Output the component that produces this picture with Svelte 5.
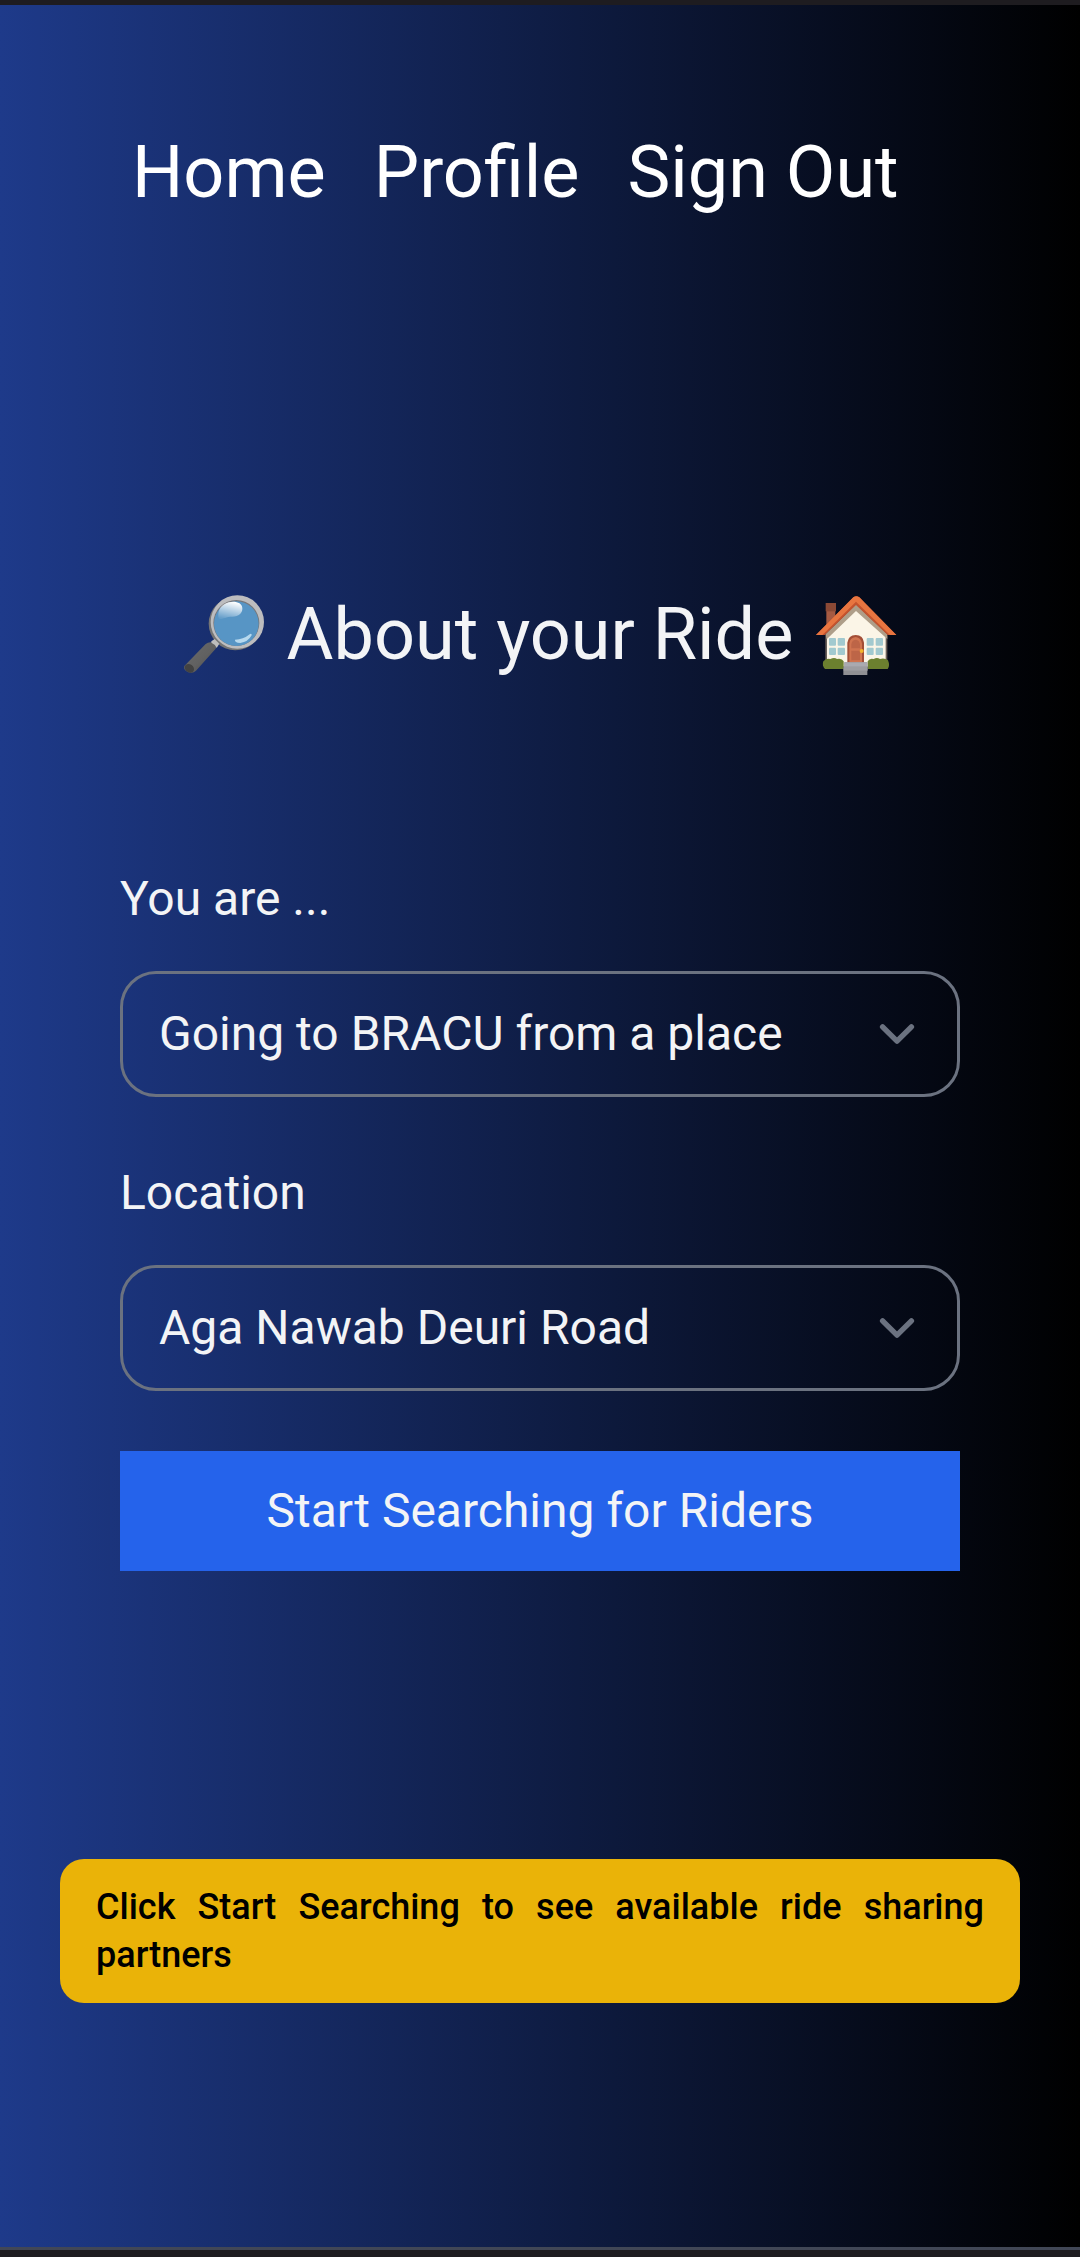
<script>
  const links = ['Home', 'Profile', 'Sign Out'];
  const fields = [
    { label: 'You are ...', value: 'Going to BRACU from a place' },
    { label: 'Location', value: 'Aga Nawab Deuri Road' }
  ];
</script>

<div class="screen">
  <main>
    <nav>
      {#each links as link}<span>{link}</span>{/each}
    </nav>

    <h1>
      <svg class="emoji" viewBox="27 30 270 270" aria-hidden="true">
        <defs>
          <linearGradient id="shine" x1="0.6" y1="0" x2="0.3" y2="1">
            <stop offset="0" stop-color="#fff" />
            <stop offset="1" stop-color="#fff" stop-opacity="0.08" />
          </linearGradient>
          <linearGradient id="handle" x1="0" y1="0" x2="1" y2="1">
            <stop offset="0" stop-color="#6b6b6b" />
            <stop offset="0.55" stop-color="#616161" />
            <stop offset="1" stop-color="#494949" />
          </linearGradient>
        </defs>
        <circle cx="196" cy="131" r="80" fill="#757575" />
        <path d="M107 192Q119 183 132 190Q142 196 137 206L78 272Q70 281 55 277Q39 270 43 258Z" fill="url(#handle)" />
        <path d="M124 184L134 177L148 191L140 204Q135 192 124 188Z" fill="#bdbdbd" />
        <ellipse cx="58" cy="265" rx="15" ry="12" transform="rotate(35 58 265)" fill="#424242" />
        <circle cx="202" cy="126" r="80" fill="#bdbdbf" />
        <circle cx="199" cy="129" r="69" fill="#77777a" />
        <circle cx="199" cy="131" r="67" fill="#5795c5" />
        <path d="M145 112C143 90 153 73 176 67C196 62 216 68 217 84C218 100 206 109 187 110C168 110 157 118 150 117Q146 116 145 112Z" fill="url(#shine)" />
        <path d="M195 179Q220 178 237 164Q246 158 245 166Q234 186 211 189Q193 188 195 179Z" fill="#b7d9ee" />
      </svg>
      <span>About your Ride</span>
      <svg class="emoji" viewBox="33 30 270 270" aria-hidden="true">
        <path d="M79 75H106V130L79 150Z" fill="#a65a42" />
        <path d="M77 69H108V94H77Z" fill="#8b4935" />
        <path d="M76 168L168 80L262 168V258H76Z" fill="#685e58" />
        <path d="M81 165L168 84L257 165V260H81Z" fill="#fbf5e7" />
        <path d="M76 163L168 73L262 163V177L168 93L80 178Z" fill="#ae9e89" />
        <path d="M48 165L160 52Q169 45 178 52L289 165H263L168 75L74 165Z" fill="#c4532e" />
        <path d="M48 165L160 52Q169 45 178 52L289 165H270L168 65L67 165Z" fill="#e87540" />
        <g fill="#a2c9cf">
          <rect x="87" y="174" width="21" height="23" rx="3" />
          <rect x="113" y="174" width="22" height="23" rx="3" />
          <rect x="87" y="203" width="21" height="22" rx="3" />
          <rect x="113" y="203" width="22" height="22" rx="3" />
          <rect x="200" y="174" width="21" height="23" rx="3" />
          <rect x="227" y="174" width="22" height="23" rx="3" />
          <rect x="200" y="203" width="21" height="22" rx="3" />
          <rect x="227" y="203" width="22" height="22" rx="3" />
        </g>
        <path d="M142 248V188Q145 166 167 165Q190 166 192 188V248Z" fill="#a34e36" />
        <path d="M148 246V191Q149 173 167 171Q184 173 186 191V246Z" fill="#d07450" />
        <path d="M154 205V193Q156 180 167 179Q178 180 180 193V205ZM154 212H180V241H154Z" fill="#bd6547" />
        <circle cx="185" cy="213" r="6" fill="#f3b52c" />
        <path d="M75 267Q65 257 70 244Q78 233 91 237Q103 231 111 237Q126 234 131 244V267ZM203 267V244Q209 233 221 237Q231 231 240 237Q254 233 264 241Q271 258 263 267Z" fill="#6c802f" />
        <path d="M133 247H202V285H130V262H133Z" fill="#909094" />
        <path d="M133 247H202V260H133Z" fill="#aaaab0" />
        <path d="M131 261H203V272H131Z" fill="#9d9da1" />
      </svg>
    </h1>

    <div class="form">
      {#each fields as field}
        <div class="field">
          <div class="label">{field.label}</div>
          <div class="select">
            <span>{field.value}</span>
            <svg viewBox="0 0 20 20" fill="none" aria-hidden="true">
              <path d="M6 8l4 4 4-4" stroke="#6b7280" stroke-width="1.5" stroke-linecap="round" stroke-linejoin="round" />
            </svg>
          </div>
        </div>
      {/each}
      <button type="button">Start Searching for Riders</button>
    </div>

    <p class="note">Click Start Searching to see available ride sharing partners</p>
  </main>
</div>

<style>
  :global(body) {
    margin: 0;
  }
  .screen {
    box-sizing: border-box;
    height: 2257px;
    border-top: 5px solid #1e1c20;
    border-bottom: 7px solid #1e1c20;
    font-family: Roboto, sans-serif;
    color: #f3f4f6;
    background: #1e1c20;
  }
  main {
    box-sizing: border-box;
    height: 2245px;
    padding: 120px 60px 0;
    border-bottom: 3px solid #414756;
    background: linear-gradient(to right, #1e3a8a, #000) border-box;
  }
  nav {
    display: flex;
    gap: 48px;
    padding-left: 72px;
    font-size: 72px;
    line-height: 96px;
    color: #fff;
    white-space: nowrap;
  }
  h1 {
    display: flex;
    justify-content: center;
    align-items: center;
    gap: 18px;
    margin: 366px 0 0;
    font-size: 72px;
    font-weight: 400;
    line-height: 96px;
    white-space: nowrap;
  }
  .emoji {
    width: 90px;
    height: 90px;
  }
  .form {
    display: flex;
    flex-direction: column;
    gap: 60px;
    margin: 180px 60px 0;
    font-size: 48px;
    line-height: 72px;
  }
  .label {
    margin-bottom: 36px;
  }
  .select {
    box-sizing: border-box;
    display: flex;
    align-items: center;
    justify-content: space-between;
    height: 126px;
    padding: 0 24px 0 36px;
    border: 3px solid #6b7280;
    border-radius: 36px;
  }
  .select svg {
    width: 72px;
    height: 72px;
  }
  button {
    height: 120px;
    padding: 0;
    border: 0;
    background: #2563eb;
    color: #f3f4f6;
    font: inherit;
  }
  .note {
    margin: 288px 0 0;
    padding: 24px 36px;
    border-radius: 24px;
    background: #eab308;
    color: #000;
    font-size: 36px;
    font-weight: 500;
    line-height: 48px;
    text-align: justify;
  }
</style>
